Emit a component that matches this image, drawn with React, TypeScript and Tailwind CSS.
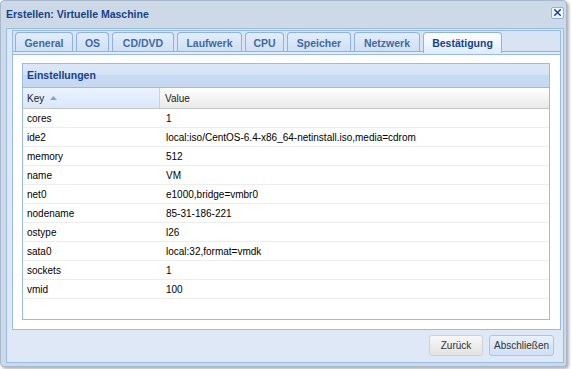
import { X } from 'lucide-react';

const tabs = [
  { label: 'General', w: 'w-[58px]' },
  { label: 'OS', w: 'w-[33px]' },
  { label: 'CD/DVD', w: 'w-[62px]' },
  { label: 'Laufwerk', w: 'w-[65px]' },
  { label: 'CPU', w: 'w-[39px]' },
  { label: 'Speicher', w: 'w-[64px]' },
  { label: 'Netzwerk', w: 'w-[66px]' },
  { label: 'Bestätigung', w: 'w-[79px]', active: true },
];

const rows: [string, string][] = [
  ['cores', '1'],
  ['ide2', 'local:iso/CentOS-6.4-x86_64-netinstall.iso,media=cdrom'],
  ['memory', '512'],
  ['name', 'VM'],
  ['net0', 'e1000,bridge=vmbr0'],
  ['nodename', '85-31-186-221'],
  ['ostype', 'l26'],
  ['sata0', 'local:32,format=vmdk'],
  ['sockets', '1'],
  ['vmid', '100'],
];

function Tab({ label, w, active }: { label: string; w: string; active?: boolean }) {
  return (
    <div
      className={`${w} relative z-10 flex justify-center rounded-t-[4px] border border-b-0 border-[#8db2e3] pt-[3px] text-[10.5px] font-bold ${
        active
          ? '-mb-[2px] h-[21px] bg-gradient-to-b from-[#ffffff] to-[#deecfd] text-[#15428b]'
          : 'h-[19px] bg-gradient-to-b from-[#e3eefc] to-[#cfdff4] text-[#416aa0]'
      }`}
    >
      {label}
    </div>
  );
}

export default function App() {
  return (
    <div className="h-[369px] w-[572px] bg-white font-['Liberation_Sans',Arial,sans-serif] text-[10px] text-black">
      <div className="flex h-[367px] w-[567px] flex-col rounded-[4px] border border-[#a7b8cf] bg-[#ced9e7] pl-[5px] pr-[2px] pb-[3px] shadow-[2px_2px_3px_rgba(0,0,0,0.3)]">
        {/* title bar */}
        <div className="flex h-[27px] shrink-0 items-center justify-between">
          <span className="pt-[1px] text-[10.5px] font-bold text-[#15428b]">Erstellen: Virtuelle Maschine</span>
          <div className="mb-[4px] flex h-[12px] w-[13px] items-center justify-center rounded-[2px] border border-[#8db2e3] bg-[#eef4fc]">
            <X size={11} strokeWidth={3} className="text-[#15428b]" />
          </div>
        </div>

        {/* window body */}
        <div className="flex flex-1 flex-col border border-[#99bbe8] bg-[#dfe8f6] pt-[1px] pl-[5px] pr-[2px]">
          <div className="flex h-[300px] flex-col">
            {/* tab bar */}
            <div className="shrink-0 border border-b-0 border-[#99bbe8] bg-[#d8e4f3]">
              <div className="flex items-start gap-[3px] pl-[2px] pt-[1px]">
                {tabs.map((t) => (
                  <Tab key={t.label} {...t} />
                ))}
              </div>
              <div className="h-[3px] border-t border-[#8db2e3] bg-[#deecfd]" />
            </div>

            {/* tab body */}
            <div className="flex-1 border border-[#99bbe8] bg-white pt-[8px] pl-[9px] pr-[10px] pb-[9px]">
              <div className="flex h-[257px] flex-col border border-[#99bbe8]">
                <div className="flex h-[23px] shrink-0 items-center bg-[linear-gradient(#dbe7f6_0%,#d6e4f6_45%,#c8daf2_50%,#c7d9f1_100%)] pl-[4px] text-[10.5px] font-bold text-[#15428b]">
                  Einstellungen
                </div>
                <div className="flex h-[22px] shrink-0 border-y border-[#c5c5c5] border-t-[#99bbe8]">
                  <div className="flex w-[137px] items-center gap-[6px] border-r border-[#d0d0d0] bg-gradient-to-b from-[#ebf3fd] to-[#d9e8fb] pl-[4px] text-[#222]">
                    Key
                    <svg width="7" height="4" viewBox="0 0 7 4">
                      <path d="M0 4 L3.5 0 L7 4 Z" fill="#7fa6d9" />
                    </svg>
                  </div>
                  <div className="flex flex-1 items-center bg-gradient-to-b from-[#ffffff] to-[#e9e9e9] pl-[5px] text-[#222]">
                    Value
                  </div>
                </div>
                <div className="flex-1 bg-white">
                  {rows.map(([k, v]) => (
                    <div key={k} className="flex h-[19px] items-center border-b border-[#ededed]">
                      <div className="w-[137px] pl-[4px]">{k}</div>
                      <div className="pl-[6px]">{v}</div>
                    </div>
                  ))}
                </div>
              </div>
            </div>
          </div>

          {/* buttons */}
          <div className="flex flex-1 items-start justify-end gap-[6px] pt-[5px] pr-[7px]">
            <button className="h-[21px] w-[54px] rounded-[3px] border border-[#d0d0d0] bg-gradient-to-b from-[#f8f8f8] to-[#e3e3e3] text-[10px] text-[#333]">
              Zurück
            </button>
            <button className="h-[21px] w-[65px] rounded-[3px] border border-[#a9c6ea] bg-gradient-to-b from-[#e8f1fc] to-[#cfe0f6] text-[10px] text-[#333]">
              Abschließen
            </button>
          </div>
        </div>
      </div>
    </div>
  );
}
